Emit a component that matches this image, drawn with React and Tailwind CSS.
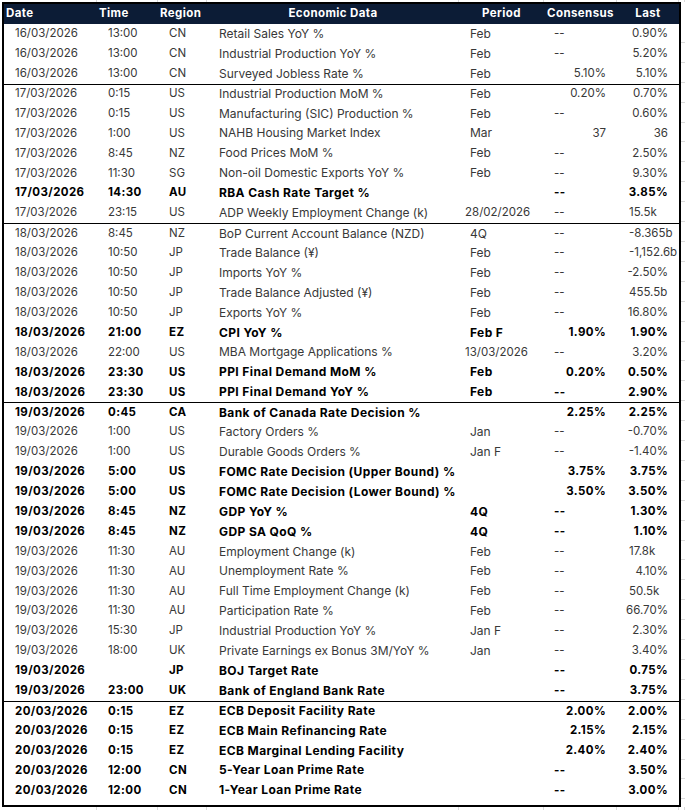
import React from "react";

const rows = [
  ["16/03/2026", "13:00", "CN", "Retail Sales YoY %", "Feb", "--", "0.90%", 0, 0],
  ["16/03/2026", "13:00", "CN", "Industrial Production YoY %", "Feb", "--", "5.20%", 0, 0],
  ["16/03/2026", "13:00", "CN", "Surveyed Jobless Rate %", "Feb", "5.10%", "5.10%", 0, 0],
  ["17/03/2026", "0:15", "US", "Industrial Production MoM %", "Feb", "0.20%", "0.70%", 0, 1],
  ["17/03/2026", "0:15", "US", "Manufacturing (SIC) Production %", "Feb", "--", "0.60%", 0, 0],
  ["17/03/2026", "1:00", "US", "NAHB Housing Market Index", "Mar", "37", "36", 0, 0],
  ["17/03/2026", "8:45", "NZ", "Food Prices MoM %", "Feb", "--", "2.50%", 0, 0],
  ["17/03/2026", "11:30", "SG", "Non-oil Domestic Exports YoY %", "Feb", "--", "9.30%", 0, 0],
  ["17/03/2026", "14:30", "AU", "RBA Cash Rate Target %", "", "--", "3.85%", 1, 0],
  ["17/03/2026", "23:15", "US", "ADP Weekly Employment Change (k)", "28/02/2026", "--", "15.5k", 0, 0],
  ["18/03/2026", "8:45", "NZ", "BoP Current Account Balance (NZD)", "4Q", "--", "-8.365b", 0, 1],
  ["18/03/2026", "10:50", "JP", "Trade Balance (¥)", "Feb", "--", "-1,152.6b", 0, 0],
  ["18/03/2026", "10:50", "JP", "Imports YoY %", "Feb", "--", "-2.50%", 0, 0],
  ["18/03/2026", "10:50", "JP", "Trade Balance Adjusted (¥)", "Feb", "--", "455.5b", 0, 0],
  ["18/03/2026", "10:50", "JP", "Exports YoY %", "Feb", "--", "16.80%", 0, 0],
  ["18/03/2026", "21:00", "EZ", "CPI YoY %", "Feb F", "1.90%", "1.90%", 1, 0],
  ["18/03/2026", "22:00", "US", "MBA Mortgage Applications %", "13/03/2026", "--", "3.20%", 0, 0],
  ["18/03/2026", "23:30", "US", "PPI Final Demand MoM %", "Feb", "0.20%", "0.50%", 1, 0],
  ["18/03/2026", "23:30", "US", "PPI Final Demand YoY %", "Feb", "--", "2.90%", 1, 0],
  ["19/03/2026", "0:45", "CA", "Bank of Canada Rate Decision %", "", "2.25%", "2.25%", 1, 1],
  ["19/03/2026", "1:00", "US", "Factory Orders %", "Jan", "--", "-0.70%", 0, 0],
  ["19/03/2026", "1:00", "US", "Durable Goods Orders %", "Jan F", "--", "-1.40%", 0, 0],
  ["19/03/2026", "5:00", "US", "FOMC Rate Decision (Upper Bound) %", "", "3.75%", "3.75%", 1, 0],
  ["19/03/2026", "5:00", "US", "FOMC Rate Decision (Lower Bound) %", "", "3.50%", "3.50%", 1, 0],
  ["19/03/2026", "8:45", "NZ", "GDP YoY %", "4Q", "--", "1.30%", 1, 0],
  ["19/03/2026", "8:45", "NZ", "GDP SA QoQ %", "4Q", "--", "1.10%", 1, 0],
  ["19/03/2026", "11:30", "AU", "Employment Change (k)", "Feb", "--", "17.8k", 0, 0],
  ["19/03/2026", "11:30", "AU", "Unemployment Rate %", "Feb", "--", "4.10%", 0, 0],
  ["19/03/2026", "11:30", "AU", "Full Time Employment Change (k)", "Feb", "--", "50.5k", 0, 0],
  ["19/03/2026", "11:30", "AU", "Participation Rate %", "Feb", "--", "66.70%", 0, 0],
  ["19/03/2026", "15:30", "JP", "Industrial Production YoY %", "Jan F", "--", "2.30%", 0, 0],
  ["19/03/2026", "18:00", "UK", "Private Earnings ex Bonus 3M/YoY %", "Jan", "--", "3.40%", 0, 0],
  ["19/03/2026", "", "JP", "BOJ Target Rate", "", "--", "0.75%", 1, 0],
  ["19/03/2026", "23:00", "UK", "Bank of England Bank Rate", "", "--", "3.75%", 1, 0],
  ["20/03/2026", "0:15", "EZ", "ECB Deposit Facility Rate", "", "2.00%", "2.00%", 1, 1],
  ["20/03/2026", "0:15", "EZ", "ECB Main Refinancing Rate", "", "2.15%", "2.15%", 1, 0],
  ["20/03/2026", "0:15", "EZ", "ECB Marginal Lending Facility", "", "2.40%", "2.40%", 1, 0],
  ["20/03/2026", "12:00", "CN", "5-Year Loan Prime Rate", "", "--", "3.50%", 1, 0],
  ["20/03/2026", "12:00", "CN", "1-Year Loan Prime Rate", "", "--", "3.00%", 1, 0],
];

const COLS = "grid grid-cols-[93px_61px_49px_252px_85px_73px_62px]";
const STRIP = "grid grid-cols-[97px_61px_49px_252px_85px_73px_62px_6px]";

function Strip({ h }) {
  return (
    <div className={`${STRIP} ${h} shrink-0 overflow-hidden`}>
      {Array.from({ length: 8 }).map((_, i) => (
        <div key={i} className="border-r border-[#dadada]" />
      ))}
    </div>
  );
}

export default function App() {
  return (
    <div
      className="w-[685px] h-[810px] bg-white overflow-hidden flex flex-col text-[11.5px] leading-none"
      style={{ fontFamily: "Inter, 'Noto Sans', sans-serif" }}
    >
      <Strip h="h-[2px]" />
      <div className="flex shrink-0">
        <div className="w-[2px] shrink-0" />
        <div className="w-[679px] shrink-0 border-2 border-black">
          <div className={`${COLS} h-[20px] items-center bg-[#0c1c36] text-white font-bold tracking-[0.4px]`}>
            <div className="pl-[2px]">Date</div>
            <div className="pl-[2px]">Time</div>
            <div className="pl-[2px]">Region</div>
            <div className="text-center">Economic Data</div>
            <div className="text-center">Period</div>
            <div className="text-center">Consensus</div>
            <div className="text-center">Last</div>
          </div>
          {rows.map((r, i) => {
            const [date, time, reg, desc, per, cons, last, bold, grp] = r;
            const isDate = per.includes("/");
            const lastRight = last.endsWith("%") || /^\d+$/.test(last);
            return (
              <div
                key={i}
                className={`${COLS} h-[19.92px] items-center ${grp ? "border-t border-black" : ""} ${
                  bold ? "font-bold text-black tracking-[0.4px]" : "font-normal text-[#383838]"
                }`}
              >
                <div className="pl-[11px] whitespace-nowrap">{date}</div>
                <div className="pl-[11px]">{time}</div>
                <div className="pl-[11px]">{reg}</div>
                <div className="pl-[12px] whitespace-nowrap text-[12px]">{desc}</div>
                <div className={`${isDate ? "pl-[6px] text-[11.5px]" : "pl-[11px] text-[12px]"} whitespace-nowrap`}>{per}</div>
                <div className={cons === "--" ? "pl-[10px]" : "pr-[11px] text-right"}>{cons}</div>
                <div className={`${lastRight ? "pr-[11px] text-right" : "pl-[12px]"} whitespace-nowrap`}>{last}</div>
              </div>
            );
          })}
        </div>
        <div className="flex-1 flex flex-col pt-[21px] h-[805px] overflow-hidden">
          {Array.from({ length: 39 }).map((_, i) => (
            <div key={i} className="h-[19.92px] shrink-0 border-b border-[#dadada]" />
          ))}
        </div>
      </div>
      <Strip h="flex-1" />
    </div>
  );
}
